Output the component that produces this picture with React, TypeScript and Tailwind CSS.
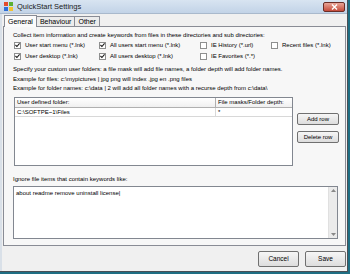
import React from "react";

function Check({ checked, label }: { checked?: boolean; label: string }) {
  return (
    <div className="flex items-center gap-[4px]">
      <div className="w-[7px] h-[7px] border border-[#8e8f8f] bg-white flex items-center justify-center">
        {checked && (
          <svg width="6" height="6" viewBox="0 0 6 6">
            <path d="M0.5 3 L2.3 4.8 L5.5 1" stroke="#1c1c1c" strokeWidth="1.3" fill="none" />
          </svg>
        )}
      </div>
      <span>{label}</span>
    </div>
  );
}

function Btn({ children, className = "" }: { children: React.ReactNode; className?: string }) {
  return (
    <div
      className={
        "flex items-center justify-center border border-[#707070] rounded-[2px] bg-gradient-to-b from-[#f6f6f6] to-[#dddddd] " +
        className
      }
    >
      {children}
    </div>
  );
}

export default function App() {
  return (
    <div
      className="w-[350px] h-[274px] bg-[#1f6e83] overflow-hidden text-[6px] leading-[8px] text-[#000]"
      style={{ fontFamily: '"Liberation Sans", Arial, sans-serif' }}
    >
      <div className="w-[348px] h-[272px] bg-[#f0f0f0] border-r border-b border-[#4a4f55] flex flex-col">
        {/* title bar */}
        <div className="h-[14px] flex items-center pl-[4px] pr-[2px] bg-gradient-to-b from-[#d8e4f1] to-[#c2d3e7] border-b border-[#a9b9cc]">
          <svg width="9" height="9" viewBox="0 0 9 9" className="mr-[4px]">
            <rect x="0" y="0" width="4" height="4" fill="#e34b2a" />
            <rect x="5" y="0" width="4" height="4" fill="#5cb033" />
            <rect x="0" y="5" width="4" height="4" fill="#2f6fd6" />
            <rect x="5" y="5" width="4" height="4" fill="#f2c230" />
          </svg>
          <span className="text-[7.5px] text-[#1b1b1b]">QuickStart Settings</span>
          <div className="ml-auto w-[22px] h-[10px] rounded-[2px] border border-[#6b2d26] bg-gradient-to-b from-[#e8a497] to-[#c4493a] flex items-center justify-center">
            <svg width="7" height="6" viewBox="0 0 7 6">
              <path d="M1 0.5 L6 5.5 M6 0.5 L1 5.5" stroke="white" strokeWidth="1.4" />
            </svg>
          </div>
        </div>
        {/* client */}
        <div className="flex-1 flex border-l-[2px] border-[#d9e0e8]">
          <div className="flex-1 flex flex-col pl-[1px]">
            {/* tabs */}
            <div className="h-[12px] flex items-end pl-[1px]">
              <div className="h-[12px] px-[3px] bg-[#fbfbfb] border border-[#898c95] border-b-0 flex items-center text-[7px] relative top-[1px] z-10">
                General
              </div>
              <div className="h-[10px] px-[3px] bg-[#ececec] border-r border-t border-[#898c95] flex items-center text-[7px]">
                Behaviour
              </div>
              <div className="h-[10px] px-[3px] bg-[#ececec] border-r border-t border-[#898c95] flex items-center text-[7px]">
                Other
              </div>
            </div>
            {/* panel */}
            <div className="w-[343px] h-[220px] border border-[#898c95] bg-[#f7f7f7] flex flex-col pl-[9px] pt-[4px]">
              <div>Collect item information and create keywords from files in these directories and sub directories:</div>
              <div className="grid grid-cols-[85px_101px_71px_auto] gap-y-[3px] mt-[2px] pl-[1px]">
                <Check checked label="User start menu (*.lnk)" />
                <Check checked label="All users start menu (*.lnk)" />
                <Check label="IE History (*.url)" />
                <Check label="Recent files (*.lnk)" />
                <Check checked label="User desktop (*.lnk)" />
                <Check checked label="All users desktop (*.lnk)" />
                <Check label="IE Favorites (*.*)" />
              </div>
              <div className="mt-[5px] leading-[9.5px]">
                <div>Specify your custom user folders: a file mask will add file names, a folder depth will add folder names.</div>
                <div>Example for files: c:\mypictures | jpg png will index .jpg en .png files</div>
                <div>Example for folder names: c:\data | 2 will add all folder names with a recurse depth from c:\data\</div>
              </div>
              <div className="flex mt-[3px] gap-[4px] pl-[1px]">
                <div className="w-[279px] h-[69px] bg-white border border-[#828790] flex flex-col">
                  <div className="flex h-[10px] border-b border-[#b0b0b0] bg-gradient-to-b from-white to-[#f0f0f0]">
                    <div className="w-[201px] pl-[2px] border-r border-[#b0b0b0] flex items-center">User defined folder:</div>
                    <div className="flex-1 pl-[2px] flex items-center">File masks/Folder depth:</div>
                  </div>
                  <div className="flex h-[9px] border-b border-[#d8d8d8]">
                    <div className="w-[201px] pl-[2px] border-r border-[#d8d8d8] flex items-center">C:\SOFTPE~1\Files</div>
                    <div className="flex-1 pl-[2px] flex items-center">*</div>
                  </div>
                </div>
                <div className="flex flex-col gap-[6px] mt-[16px]">
                  <Btn className="w-[42px] h-[12px]">Add row</Btn>
                  <Btn className="w-[42px] h-[12px]">Delete row</Btn>
                </div>
              </div>
              <div className="mt-[9px]">Ignore file items that contain keywords like:</div>
              <div className="mt-[3px] w-[325px] h-[53px] bg-white border border-[#828790] flex">
                <div className="flex-1 pl-[2px] pt-[2px]">about readme remove uninstall license|</div>
                <div className="w-[9px] bg-[#ebebeb] border-l border-[#e0e0e0] flex flex-col items-center justify-between py-[2px]">
                  <svg width="5" height="3" viewBox="0 0 5 3"><path d="M0 3 L2.5 0 L5 3 Z" fill="#888" /></svg>
                  <svg width="5" height="3" viewBox="0 0 5 3"><path d="M0 0 L2.5 3 L5 0 Z" fill="#888" /></svg>
                </div>
              </div>
            </div>
            {/* bottom */}
            <div className="flex-1 flex items-center justify-end gap-[6px] pr-[1px] pt-[1px]">
              <Btn className="w-[41px] h-[16px] text-[6.5px]">Cancel</Btn>
              <Btn className="w-[41px] h-[16px] text-[6.5px]">Save</Btn>
            </div>
          </div>
        </div>
      </div>
    </div>
  );
}
